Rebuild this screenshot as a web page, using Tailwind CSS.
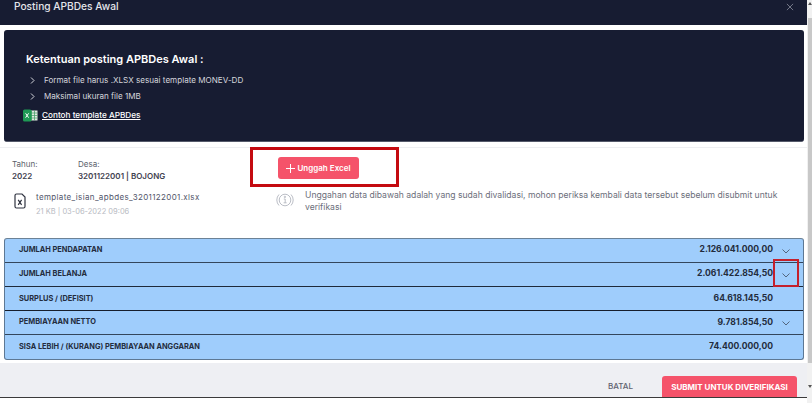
<!DOCTYPE html>
<html lang="id">
<head>
    <meta charset="UTF-8">
    <title>Posting APBDes Awal</title>
    <script src="https://cdn.jsdelivr.net/npm/@tailwindcss/browser@4"></script>
</head>
<body class="bg-white font-['Inter',sans-serif] overflow-hidden">
<div class="relative w-[812px] h-[403px] overflow-hidden flex">
    <div class="w-[807px] flex flex-col shrink-0">
        <!-- Header -->
        <div class="h-[25px] bg-[#171c32] flex items-start justify-between pl-[14px] pr-[13px] shrink-0">
            <span class="text-[10.2px] leading-[12px] font-medium text-[#e4e5ea]">Posting APBDes Awal</span>
            <svg class="mt-[3px] w-[8px] h-[8px] text-[#7f8392]" viewBox="0 0 9 9" fill="none" stroke="currentColor" stroke-width="1"><path d="M1 1l7 7M8 1l-7 7"/></svg>
        </div>

        <!-- Ketentuan -->
        <div class="mt-[5px] ml-[4px] w-[800px] h-[112px] bg-[#171c32] rounded-[3px] border-b border-[#555a6a] pl-[22px] pt-[21px] shrink-0">
            <h2 class="text-[11px] leading-[16px] font-semibold text-white">Ketentuan posting APBDes Awal :</h2>
            <ul class="mt-[5px] text-[#d5d6dc] text-[8.1px]">
                <li class="flex items-center h-[16px] pl-[4px] gap-[9px]">
                    <svg class="w-[5px] h-[7px]" viewBox="0 0 5 7" fill="none" stroke="currentColor" stroke-width="1"><path d="M1 .5l3 3-3 3"/></svg>
                    Format file harus .XLSX sesuai template MONEV-DD
                </li>
                <li class="flex items-center h-[16px] pl-[4px] gap-[9px]">
                    <svg class="w-[5px] h-[7px]" viewBox="0 0 5 7" fill="none" stroke="currentColor" stroke-width="1"><path d="M1 .5l3 3-3 3"/></svg>
                    Maksimal ukuran file 1MB
                </li>
            </ul>
            <div class="-ml-[3px] mt-[5px] flex items-center gap-[4px]">
                <svg class="w-[15px] h-[13px]" viewBox="0 0 15 13">
                    <rect x="6" y="1.5" width="8.5" height="10" fill="#dfe8df"/>
                    <path d="M8.5 1.5v10M11.5 1.5v10M6 4h8.5M6 6.5h8.5M6 9h8.5" stroke="#3c9a62" stroke-width=".7"/>
                    <rect x="0" y="0.5" width="8.5" height="12" rx="1.5" fill="#1f9a55"/>
                    <path d="M2.6 4.3l3 4.4M5.6 4.3l-3 4.4" stroke="#fff" stroke-width="1"/>
                </svg>
                <a class="text-[8.2px] font-medium text-white underline">Contoh template APBDes</a>
            </div>
        </div>

        <!-- Info -->
        <div class="mt-[5px] border-t border-[#eeeff2] h-[91px] flex shrink-0">
            <div class="w-[262px] pl-[12px] pt-[10px] shrink-0">
                <div class="flex text-[8px] text-[#5c5f6b]">
                    <div class="w-[66px]">
                        <div class="leading-[12px]">Tahun:</div>
                        <div class="leading-[12px] font-semibold text-[#3f4250]">2022</div>
                    </div>
                    <div>
                        <div class="leading-[12px]">Desa:</div>
                        <div class="leading-[12px] font-semibold text-[#3f4250]">3201122001 | BOJONG</div>
                    </div>
                </div>
                <div class="mt-[8px] flex items-start gap-[10px]">
                    <svg class="mt-[3px] ml-[2px] w-[12px] h-[16px] text-[#2f3340]" viewBox="0 0 12 16" fill="none" stroke="currentColor" stroke-width="1.2">
                        <path d="M1 2.5a1.5 1.5 0 0 1 1.5-1.5H8l3 3v9.5a1.5 1.5 0 0 1-1.5 1.5h-7A1.5 1.5 0 0 1 1 13.5z"/>
                        <path d="M4.2 6.8l3.4 5M7.6 6.8l-3.4 5"/>
                    </svg>
                    <div>
                        <div class="text-[8px] leading-[14px] text-[#52556a] tracking-[.35px]">template_isian_apbdes_3201122001.xlsx</div>
                        <div class="text-[7.5px] leading-[14px] mt-[1px] text-[#b8bac2]">21 KB | 03-06-2022 09:06</div>
                    </div>
                </div>
            </div>
            <div class="flex-1 pt-[9px] min-w-0">
                <button class="ml-[16px] w-[81px] h-[22px] rounded-[3px] bg-[#f5536a] text-white text-[8px] font-semibold flex items-center justify-center gap-[2px]">
                    <svg class="w-[9px] h-[9px]" viewBox="0 0 9 9" stroke="currentColor" stroke-width="1"><path d="M4.5 0v9M0 4.5h9"/></svg>
                    Unggah Excel
                </button>
                <div class="mt-[10px] flex gap-[11px] pl-[14px]">
                    <svg class="mt-[2px] w-[18px] h-[18px] text-[#a9adb8] shrink-0" viewBox="0 0 18 18" fill="none" stroke="currentColor" stroke-width=".8">
                        <circle cx="9" cy="9" r="5.8"/>
                        <path d="M3 3.5a8 8 0 0 0 0 11M15 3.5a8 8 0 0 1 0 11"/>
                        <path d="M7.8 8h1.4v3.6M7.6 11.8h3"/>
                        <circle cx="8.9" cy="5.9" r=".7"/>
                    </svg>
                    <p class="w-[478px] text-[8.6px] leading-[12px] text-[#6b6e7a]">Unggahan data dibawah adalah yang sudah divalidasi, mohon periksa kembali data tersebut sebelum disubmit untuk verifikasi</p>
                </div>
            </div>
        </div>

        <!-- Rows -->
        <div class="ml-[4px] w-[800px] rounded-[3px] overflow-hidden bg-[#9fcdfc] border border-[#5d7894] border-t-[#6c8296] shrink-0 text-[#232c3d] text-[7.4px] font-bold">
            <div class="h-[24px] flex items-center pl-[14px] pb-[2px] border-b border-[#33465c]">
                <span class="flex-1">JUMLAH PENDAPATAN</span>
                <span class="text-[8.6px] font-bold">2.126.041.000,00</span>
                <svg class="mt-[3px] ml-[9px] mr-[13px] w-[8px] h-[5px] text-[#4a5a70]" viewBox="0 0 8 5" fill="none" stroke="currentColor" stroke-width=".9"><path d="M.5.5L4 4 7.5.5"/></svg>
            </div>
            <div class="h-[24px] flex items-center pl-[14px] pb-[2px] border-b border-[#1f2a3a]">
                <span class="flex-1">JUMLAH BELANJA</span>
                <span class="text-[8.6px] font-bold">2.061.422.854,50</span>
                <svg class="mt-[3px] ml-[9px] mr-[13px] w-[8px] h-[5px] text-[#4a5a70]" viewBox="0 0 8 5" fill="none" stroke="currentColor" stroke-width=".9"><path d="M.5.5L4 4 7.5.5"/></svg>
            </div>
            <div class="h-[24px] flex items-center pl-[14px] pr-[30px] border-b border-[#161e2c]">
                <span class="flex-1">SURPLUS / (DEFISIT)</span>
                <span class="text-[8.6px] font-bold">64.618.145,50</span>
            </div>
            <div class="h-[24px] flex items-center pl-[14px] pb-[1px] border-b border-[#33465c]">
                <span class="flex-1">PEMBIAYAAN NETTO</span>
                <span class="text-[8.6px] font-bold">9.781.854,50</span>
                <svg class="mt-[3px] ml-[9px] mr-[13px] w-[8px] h-[5px] text-[#4a5a70]" viewBox="0 0 8 5" fill="none" stroke="currentColor" stroke-width=".9"><path d="M.5.5L4 4 7.5.5"/></svg>
            </div>
            <div class="h-[24px] flex items-center pl-[14px] pr-[30px] pb-[1px]">
                <span class="flex-1">SISA LEBIH / (KURANG) PEMBIAYAAN ANGGARAN</span>
                <span class="text-[8.6px] font-bold">74.400.000,00</span>
            </div>
        </div>

        <!-- Footer -->
        <div class="mt-[3px] h-[35px] bg-[#eeeff3] flex justify-end items-end border-b border-[#3a3a3a] shrink-0 pr-[10px]">
            <span class="mb-[5px] mr-[29px] text-[8px] font-medium text-[#5e6270]">BATAL</span>
            <button class="w-[135px] h-[21px] bg-[#f5536a] rounded-t-[3px] text-white text-[8px] font-bold">SUBMIT UNTUK DIVERIFIKASI</button>
        </div>
    </div>

    <!-- Scrollbar -->
    <div class="w-[5px] bg-[#f1f1f1] flex flex-col items-end">
        <svg class="mt-[2px] w-[4px] h-[3px] text-[#555]" viewBox="0 0 4 3" fill="currentColor"><path d="M2 0l2 3H0z"/></svg>
        <div class="mt-[13px] w-[4px] h-[345px] bg-[#c8c8c8]"></div>
        <svg class="mt-[22px] w-[4px] h-[3px] text-[#555]" viewBox="0 0 4 3" fill="currentColor"><path d="M2 3l2-3H0z"/></svg>
    </div>

    <!-- Annotation boxes -->
    <div class="absolute left-[250px] top-[147px] w-[149px] h-[40px] border-[3px] border-[#c40a10]"></div>
    <div class="absolute left-[773px] top-[259px] w-[26px] h-[28px] border-2 border-[#c4202c]"></div>
</div>
</body>
</html>
